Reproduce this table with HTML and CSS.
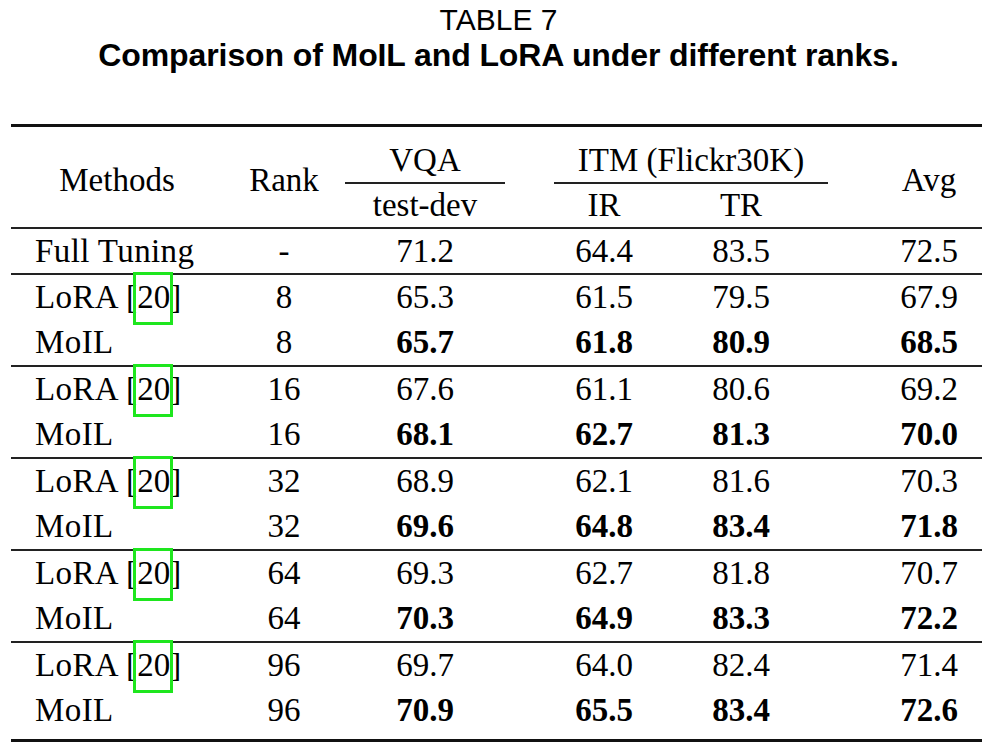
FILE: index.html
```html
<!DOCTYPE html>
<html>
<head>
<meta charset="utf-8">
<link rel="stylesheet" href="styles.css">
</head>
<body>
<div class="caption">
  <div class="cap-num">TABLE 7</div>
  <div class="cap-title">Comparison of MoIL and LoRA under different ranks.</div>
</div>
<div class="table">
  <div class="head">
    <div class="h-methods">Methods</div>
    <div class="h-rank">Rank</div>
    <div class="h-vqa">VQA</div>
    <div class="h-itm">ITM (Flickr30K)</div>
    <div class="h-avg">Avg</div>
    <div class="h-dev">test-dev</div>
    <div class="h-ir">IR</div>
    <div class="h-tr">TR</div>
  </div>
  <div class="group single">
    <div class="row">
      <div class="c-name">Full Tuning</div><div class="c-rank">-</div><div class="c-vqa">71.2</div><div class="c-ir">64.4</div><div class="c-tr">83.5</div><div class="c-avg">72.5</div>
    </div>
  </div>
  <div class="group">
    <div class="row">
      <div class="c-name">LoRA [<span class="ref">20</span>]</div><div class="c-rank">8</div><div class="c-vqa">65.3</div><div class="c-ir">61.5</div><div class="c-tr">79.5</div><div class="c-avg">67.9</div>
    </div>
    <div class="row best">
      <div class="c-name">MoIL</div><div class="c-rank">8</div><div class="c-vqa">65.7</div><div class="c-ir">61.8</div><div class="c-tr">80.9</div><div class="c-avg">68.5</div>
    </div>
  </div>
  <div class="group">
    <div class="row">
      <div class="c-name">LoRA [<span class="ref">20</span>]</div><div class="c-rank">16</div><div class="c-vqa">67.6</div><div class="c-ir">61.1</div><div class="c-tr">80.6</div><div class="c-avg">69.2</div>
    </div>
    <div class="row best">
      <div class="c-name">MoIL</div><div class="c-rank">16</div><div class="c-vqa">68.1</div><div class="c-ir">62.7</div><div class="c-tr">81.3</div><div class="c-avg">70.0</div>
    </div>
  </div>
  <div class="group">
    <div class="row">
      <div class="c-name">LoRA [<span class="ref">20</span>]</div><div class="c-rank">32</div><div class="c-vqa">68.9</div><div class="c-ir">62.1</div><div class="c-tr">81.6</div><div class="c-avg">70.3</div>
    </div>
    <div class="row best">
      <div class="c-name">MoIL</div><div class="c-rank">32</div><div class="c-vqa">69.6</div><div class="c-ir">64.8</div><div class="c-tr">83.4</div><div class="c-avg">71.8</div>
    </div>
  </div>
  <div class="group">
    <div class="row">
      <div class="c-name">LoRA [<span class="ref">20</span>]</div><div class="c-rank">64</div><div class="c-vqa">69.3</div><div class="c-ir">62.7</div><div class="c-tr">81.8</div><div class="c-avg">70.7</div>
    </div>
    <div class="row best">
      <div class="c-name">MoIL</div><div class="c-rank">64</div><div class="c-vqa">70.3</div><div class="c-ir">64.9</div><div class="c-tr">83.3</div><div class="c-avg">72.2</div>
    </div>
  </div>
  <div class="group last">
    <div class="row">
      <div class="c-name">LoRA [<span class="ref">20</span>]</div><div class="c-rank">96</div><div class="c-vqa">69.7</div><div class="c-ir">64.0</div><div class="c-tr">82.4</div><div class="c-avg">71.4</div>
    </div>
    <div class="row best">
      <div class="c-name">MoIL</div><div class="c-rank">96</div><div class="c-vqa">70.9</div><div class="c-ir">65.5</div><div class="c-tr">83.4</div><div class="c-avg">72.6</div>
    </div>
  </div>
</div>
</body>
</html>
```
FILE: styles.css
```css
html, body {
  margin: 0;
  padding: 0;
  background: #fff;
  color: #000;
}

.caption {
  font-family: "Liberation Sans", Arial, sans-serif;
  font-size: 30px;
  line-height: 35.5px;
  text-align: center;
  padding-top: 2px;
  height: 124px;
  box-sizing: border-box;
}

.cap-title {
  font-weight: 700;
  font-size: 32px;
  letter-spacing: -0.1px;
}

.table {
  --cols: 212px 122px 160px 49px 100px 174px 48px 106px;
  margin-left: 11px;
  width: 971px;
  border-top: 3px solid #111;
  border-bottom: 3px solid #111;
  font-family: "Liberation Serif", "Times New Roman", serif;
  font-size: 33px;
  padding-bottom: 6px;
}

.head {
  display: grid;
  grid-template-columns: var(--cols);
  grid-template-rows: 57px 43px;
}

.head > div {
  text-align: center;
}

.h-methods {
  grid-column: 1;
  grid-row: 1 / 3;
  align-self: center;
  padding-top: 6px;
}

.h-rank {
  grid-column: 2;
  grid-row: 1 / 3;
  align-self: center;
  padding-top: 6px;
}

.h-avg {
  grid-column: 8;
  grid-row: 1 / 3;
  align-self: center;
  padding-top: 6px;
}

.h-vqa {
  grid-column: 3;
  grid-row: 1;
  border-bottom: 2px solid #222;
  display: flex;
  align-items: flex-end;
  justify-content: center;
  padding-bottom: 3px;
}

.h-itm {
  grid-column: 5 / 7;
  grid-row: 1;
  border-bottom: 2px solid #222;
  display: flex;
  align-items: flex-end;
  justify-content: center;
  padding-bottom: 3px;
}

.h-dev {
  grid-column: 3;
  grid-row: 2;
  align-self: start;
  padding-top: 3px;
}

.h-ir {
  grid-column: 5;
  grid-row: 2;
  align-self: start;
  padding-top: 3px;
}

.h-tr {
  grid-column: 6;
  grid-row: 2;
  align-self: start;
  padding-top: 3px;
}

.group {
  border-top: 2px solid #222;
}

.row {
  display: grid;
  grid-template-columns: var(--cols);
  height: 45px;
  align-items: center;
}

.single .row {
  height: 44px;
}

.row > div {
  text-align: center;
  white-space: nowrap;
}

.row > .c-name {
  text-align: left;
  padding-left: 24px;
  letter-spacing: 0.4px;
}

.c-rank { grid-column: 2; }
.c-vqa { grid-column: 3; }
.c-ir { grid-column: 5; }
.c-tr { grid-column: 6; }
.c-avg { grid-column: 8; }

.best > div:not(.c-name):not(.c-rank) {
  font-weight: 700;
}

.ref {
  position: relative;
  letter-spacing: 0;
}

.ref::after {
  content: "";
  position: absolute;
  left: -4px;
  right: -3px;
  top: -7px;
  bottom: -10px;
  border: 3px solid #1ee61e;
}
```
